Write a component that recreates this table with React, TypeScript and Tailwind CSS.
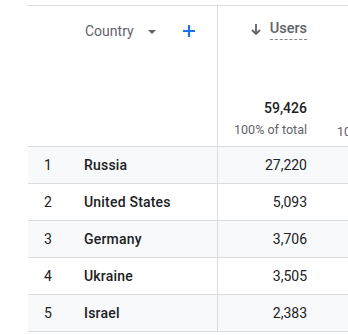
import React from "react";

const rows = [
  { n: 1, c: "Russia", u: "27,220" },
  { n: 2, c: "United States", u: "5,093" },
  { n: 3, c: "Germany", u: "3,706" },
  { n: 4, c: "Ukraine", u: "3,505" },
  { n: 5, c: "Israel", u: "2,383" },
];

export default function App() {
  return (
    <div
      className="w-[348px] h-[335px] overflow-hidden bg-white pl-[28px] pt-[5px]"
      style={{ fontFamily: "Roboto, 'Liberation Sans', sans-serif" }}
    >
      <div className="w-[420px] border-t border-[#dadce0]">
        {/* header */}
        <div className="flex h-[141px] border-b border-[#dadce0]">
          <div className="w-[189px] shrink-0 flex items-start pt-[16px]">
            <div className="ml-[57px] flex items-center text-[14px] text-[#5f6368] leading-[18px]">
              <span>Country</span>
              <svg className="ml-[14px] mt-[1px]" width="8" height="4" viewBox="0 0 8 4">
                <path d="M0 0 L8 0 L4 4 Z" fill="#5f6368" />
              </svg>
              <svg className="ml-[26px]" width="14" height="14" viewBox="0 0 14 14">
                <path d="M7 1 V13 M1 7 H13" stroke="#1a73e8" strokeWidth="2.2" />
              </svg>
            </div>
          </div>
          <div className="w-[100px] shrink-0 border-l border-[#dadce0] flex flex-col items-end pr-[10px]">
            <div className="flex items-start mt-[14px]">
              <svg className="mt-[4px] mr-[9px]" width="10" height="11" viewBox="0 0 10 11">
                <path d="M5 0 V9.5 M1 6 L5 10 L9 6" stroke="#5f6368" strokeWidth="1.8" fill="none" />
              </svg>
              <span className="text-[14.5px] font-medium text-[#5f6368] leading-[18px] border-b border-dashed border-[#80868b] pb-[1px]">
                Users
              </span>
            </div>
            <div className="mt-[59px] text-[14px] font-medium text-[#202124] leading-[18px]">59,426</div>
            <div className="mt-[5px] text-[12.5px] text-[#5f6368] leading-[16px]">100% of total</div>
          </div>
          <div className="w-[103px] shrink-0 flex flex-col items-end pr-[10px]">
            <div className="mt-[118px] text-[12.5px] text-[#5f6368] leading-[16px]">100% of total</div>
          </div>
        </div>
        {rows.map((r, i) => (
          <div
            key={r.n}
            className={`flex h-[37px] border-b border-[#dadce0] items-center ${i % 2 === 0 ? "bg-[#f8f9fa]" : "bg-white"}`}
          >
            <div className="w-[189px] shrink-0 flex items-center text-[14px] text-[#202124]">
              <span className="w-[56px] pl-[16px]">{r.n}</span>
              <span className="font-medium tracking-[0.2px]">{r.c}</span>
            </div>
            <div className="w-[100px] h-full shrink-0 border-l border-[#dadce0] flex items-center justify-end pr-[10px] text-[14px] text-[#202124]">
              {r.u}
            </div>
            <div className="w-[103px] shrink-0" />
          </div>
        ))}
      </div>
    </div>
  );
}
